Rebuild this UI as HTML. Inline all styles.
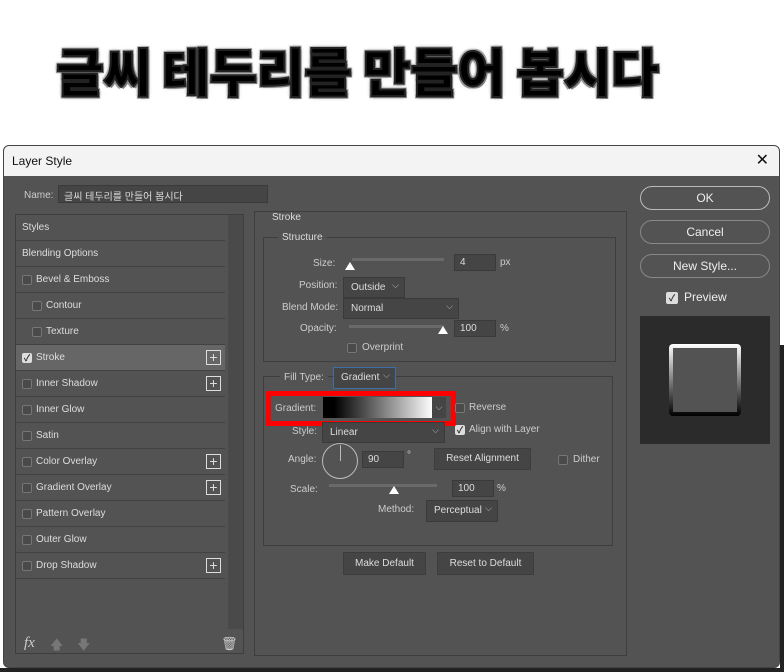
<!DOCTYPE html>
<html><head><meta charset="utf-8"><style>
*{margin:0;padding:0;box-sizing:border-box}
body{width:784px;height:672px;background:#fff;position:relative;overflow:hidden;font-family:"Liberation Sans","Noto Sans CJK KR",sans-serif;font-size:11px;color:#ddd}
.a{position:absolute}
.title{left:56px;top:32px;font-family:"Noto Sans CJK KR",sans-serif;font-weight:900;font-size:52px;color:#000;letter-spacing:-0.5px;white-space:nowrap;
-webkit-text-stroke:2px #222;
text-shadow:0 0 3px #888,0 0 5px #aaa,2px 2px 0 #777,-2px -2px 0 #ccc,-2px 2px 0 #999,2px -2px 0 #aaa}
.dlg{left:3px;top:145px;width:777px;height:523px;background:#535353;border-radius:6px;overflow:hidden;border:1px solid #444}
.tb{left:0;top:0;width:100%;height:30px;background:#f3f3f3;color:#111;font-size:12px;padding:8px 0 0 8px}
.lbl{color:#ccc;font-size:10px}
.box{border:1px solid #3e3e3e}
.field{background:#454545;border:1px solid #3a3a3a;color:#ddd;font-size:10px;padding:2px 5px}
.dd{background:#454545;border:1px solid #3a3a3a;color:#ddd;font-size:10px;padding:4px 7px}
.dd:after{content:"⌵";position:absolute;right:5px;top:2px;font-size:9px;color:#bbb}
.cb{width:10px;height:10px;border:1px solid #777;border-radius:2px;background:#4a4a4a}
.cbx{width:10px;height:10px;border-radius:2px;background:#ddd;color:#333;font-size:9px;line-height:10px;text-align:center;font-weight:bold}
.it{left:12px;width:209px;height:26px;border-bottom:1px solid #424242;font-size:10px;color:#ddd;line-height:25px}
.plus{width:15px;height:15px;border:1px solid #ddd;color:#ddd;font-size:14px;line-height:12px;text-align:center;right:4px;top:5px}
.btn{background:#454545;border:1px solid #3d3d3d;color:#ddd;font-size:10px;text-align:center}
.rb{left:636px;width:130px;height:24px;border:1px solid #888;border-radius:12px;text-align:center;color:#eee;font-size:12px;line-height:22px}
.sl{height:3px;background:#6a6a6a}
.th{width:0;height:0;border-left:5px solid transparent;border-right:5px solid transparent;border-bottom:8px solid #fff}
</style></head><body>
<div class="a title">글씨 테두리를 만들어 봅시다</div>
<div class="a" style="left:780px;top:345px;width:4px;height:327px;background:#222"></div>
<div class="a" style="left:0;top:668px;width:784px;height:4px;background:#222"></div>
<div class="a dlg">
<div class="a tb">Layer Style</div>
<div class="a" style="right:10px;top:4px;color:#111;font-size:16px">✕</div>
<div class="a lbl" style="left:20px;top:44px">Name:</div>
<div class="a field" style="left:54px;top:39px;width:210px;height:18px;font-size:10px">글씨 테두리를 만들어 봅시다</div>
<div class="a box" style="left:11px;top:68px;width:229px;height:440px;background:#535353">
<div class="a" style="left:212px;top:0;width:15px;height:414px;background:#4a4a4a"></div>
</div>
<div class="a it" style="top:69px;padding-left:6px">Styles</div>
<div class="a it" style="top:95px;padding-left:6px">Blending Options</div>
<div class="a it" style="top:121px"><div class="a cb" style="left:6px;top:8px"></div><span class="a" style="left:20px">Bevel &amp; Emboss</span></div>
<div class="a it" style="top:147px"><div class="a cb" style="left:16px;top:8px"></div><span class="a" style="left:30px">Contour</span></div>
<div class="a it" style="top:173px"><div class="a cb" style="left:16px;top:8px"></div><span class="a" style="left:30px">Texture</span></div>
<div class="a it" style="top:199px;background:#666"><div class="a cbx" style="left:6px;top:8px">✓</div><span class="a" style="left:20px">Stroke</span><div class="a plus">+</div></div>
<div class="a it" style="top:225px"><div class="a cb" style="left:6px;top:8px"></div><span class="a" style="left:20px">Inner Shadow</span><div class="a plus">+</div></div>
<div class="a it" style="top:251px"><div class="a cb" style="left:6px;top:8px"></div><span class="a" style="left:20px">Inner Glow</span></div>
<div class="a it" style="top:277px"><div class="a cb" style="left:6px;top:8px"></div><span class="a" style="left:20px">Satin</span></div>
<div class="a it" style="top:303px"><div class="a cb" style="left:6px;top:8px"></div><span class="a" style="left:20px">Color Overlay</span><div class="a plus">+</div></div>
<div class="a it" style="top:329px"><div class="a cb" style="left:6px;top:8px"></div><span class="a" style="left:20px">Gradient Overlay</span><div class="a plus">+</div></div>
<div class="a it" style="top:355px"><div class="a cb" style="left:6px;top:8px"></div><span class="a" style="left:20px">Pattern Overlay</span></div>
<div class="a it" style="top:381px"><div class="a cb" style="left:6px;top:8px"></div><span class="a" style="left:20px">Outer Glow</span></div>
<div class="a it" style="top:407px"><div class="a cb" style="left:6px;top:8px"></div><span class="a" style="left:20px">Drop Shadow</span><div class="a plus">+</div></div>
<div class="a" style="left:20px;top:489px;font-style:italic;font-family:'Liberation Serif',serif;font-size:15px;color:#ccc">fx</div>
<div class="a" style="left:46px;top:490px;color:#777;font-size:13px">🡅</div>
<div class="a" style="left:73px;top:490px;color:#777;font-size:13px">🡇</div>
<div class="a" style="left:217px;top:490px;color:#ccc;font-size:13px">🗑</div>
<div class="a box" style="left:250px;top:65px;width:373px;height:445px"></div>
<div class="a" style="left:264px;top:66px;background:#535353;padding:0 4px;font-size:10px">Stroke</div>
<div class="a box" style="left:259px;top:91px;width:353px;height:125px"></div>
<div class="a" style="left:274px;top:86px;background:#535353;padding:0 4px;font-size:10px">Structure</div>
<div class="a lbl" style="left:309px;top:112px">Size:</div>
<div class="a sl" style="left:348px;top:112px;width:92px"></div><div class="a th" style="left:341px;top:116px"></div>
<div class="a field" style="left:450px;top:108px;width:42px;height:17px">4</div><div class="a lbl" style="left:496px;top:111px">px</div>
<div class="a lbl" style="left:295px;top:134px">Position:</div>
<div class="a dd" style="left:339px;top:131px;width:62px;height:21px;position:absolute">Outside</div>
<div class="a lbl" style="left:278px;top:156px">Blend Mode:</div>
<div class="a dd" style="left:339px;top:152px;width:116px;height:21px;position:absolute">Normal</div>
<div class="a lbl" style="left:296px;top:177px">Opacity:</div>
<div class="a sl" style="left:345px;top:179px;width:95px"></div><div class="a th" style="left:434px;top:180px"></div>
<div class="a field" style="left:450px;top:174px;width:42px;height:17px">100</div><div class="a lbl" style="left:496px;top:177px">%</div>
<div class="a cb" style="left:343px;top:197px"></div><div class="a lbl" style="left:358px;top:196px">Overprint</div>
<div class="a box" style="left:259px;top:230px;width:350px;height:170px"></div>
<div class="a" style="left:276px;top:226px;background:#535353;padding:0 4px;font-size:10px;color:#ccc">Fill Type:</div>
<div class="a dd" style="left:329px;top:221px;width:63px;height:22px;position:absolute;border-color:#3d6ea8;font-size:10px">Gradient</div>
<div class="a" style="left:262px;top:245px;width:190px;height:35px;border:5px solid #f00"></div>
<div class="a lbl" style="left:271px;top:257px">Gradient:</div>
<div class="a" style="left:319px;top:251px;width:110px;height:21px;background:linear-gradient(90deg,#000 10%,#fff 100%)"></div>
<div class="a" style="left:428px;top:251px;width:14px;height:21px;background:#454545;color:#bbb;font-size:9px;text-align:center;line-height:20px">⌵</div>
<div class="a cb" style="left:451px;top:257px"></div><div class="a lbl" style="left:465px;top:256px">Reverse</div>
<div class="a lbl" style="left:288px;top:280px">Style:</div>
<div class="a dd" style="left:318px;top:276px;width:123px;height:21px;position:absolute">Linear</div>
<div class="a cbx" style="left:451px;top:279px">✓</div><div class="a lbl" style="left:465px;top:278px">Align with Layer</div>
<div class="a lbl" style="left:284px;top:308px">Angle:</div>
<div class="a" style="left:318px;top:297px;width:36px;height:36px;border:1px solid #bbb;border-radius:50%"></div>
<div class="a" style="left:336px;top:299px;width:1px;height:16px;background:#bbb"></div>
<div class="a field" style="left:358px;top:305px;width:42px;height:17px">90</div><div class="a lbl" style="left:403px;top:304px">°</div>
<div class="a btn" style="left:430px;top:302px;width:97px;height:22px;line-height:20px">Reset Alignment</div>
<div class="a cb" style="left:554px;top:309px"></div><div class="a lbl" style="left:569px;top:308px">Dither</div>
<div class="a lbl" style="left:286px;top:338px">Scale:</div>
<div class="a sl" style="left:325px;top:338px;width:108px"></div><div class="a th" style="left:385px;top:340px"></div>
<div class="a field" style="left:448px;top:334px;width:42px;height:17px">100</div><div class="a lbl" style="left:493px;top:337px">%</div>
<div class="a lbl" style="left:374px;top:358px">Method:</div>
<div class="a dd" style="left:422px;top:354px;width:72px;height:22px;position:absolute">Perceptual</div>
<div class="a btn" style="left:339px;top:406px;width:83px;height:23px;line-height:21px">Make Default</div>
<div class="a btn" style="left:433px;top:406px;width:97px;height:23px;line-height:21px">Reset to Default</div>
<div class="a rb" style="top:40px;border-color:#bbb">OK</div>
<div class="a rb" style="top:74px">Cancel</div>
<div class="a rb" style="top:108px">New Style...</div>
<div class="a cbx" style="left:662px;top:146px;width:12px;height:12px;line-height:12px">✓</div>
<div class="a" style="left:680px;top:144px;font-size:12px;color:#eee">Preview</div>
<div class="a" style="left:636px;top:170px;width:130px;height:128px;background:#2b2b2b"></div>
<div class="a" style="left:665px;top:198px;width:72px;height:72px;border-radius:4px;background:linear-gradient(#fff,#000);padding:4px"><div style="width:100%;height:100%;background:#535353"></div></div>
</div>
</body></html>
